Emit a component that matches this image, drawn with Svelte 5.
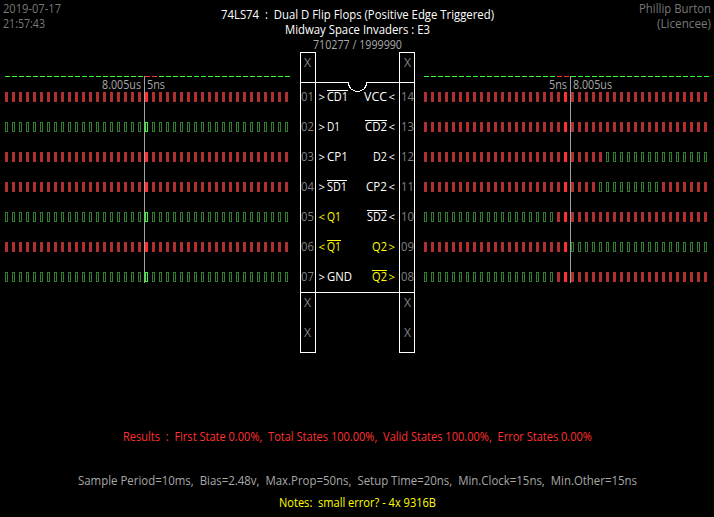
<script>
  const range = (n) => Array.from({ length: n }, (_, i) => i);
  const pattern = (fn) => range(41).map((i) => (fn(i) ? 'hi' : 'lo'));
  const all = pattern(() => true);
  const none = pattern(() => false);
  const left = [all, none, all, all, none, all, none];
  const right = [
    all,
    all,
    pattern((i) => i < 26),
    pattern((i) => i < 25 || i > 33),
    pattern((i) => i > 18),
    pattern((i) => i < 21),
    pattern((i) => i > 18)
  ];
  // Pin label: [pin, name, name start, name end, inverted, output]
  const pinsLeft = [
    ['01', 'CD1', 28, 48, true, false],
    ['02', 'D1', 28, 40, false, false],
    ['03', 'CP1', 28, 48, false, false],
    ['04', 'SD1', 28, 47, true, false],
    ['05', 'Q1', 28, 41, false, true],
    ['06', 'Q1', 28, 41, true, true],
    ['07', 'GND', 28, 52, false, false]
  ];
  const pinsRight = [
    ['14', 'VCC', 65, 87, false, false],
    ['13', 'CD2', 66, 87, true, false],
    ['12', 'D2', 74, 87, false, false],
    ['11', 'CP2', 67, 87, false, false],
    ['10', 'SD2', 68, 87, true, false],
    ['09', 'Q2', 73, 87, false, true],
    ['08', 'Q2', 73, 87, true, true]
  ];
</script>

{#snippet line(text, width, cls)}
  <svg class="line {cls}" {width} height="15">
    <text x="0" y="12" textLength={width} lengthAdjust="spacingAndGlyphs">{text}</text>
  </svg>
{/snippet}

{#snippet wave(rows, cursor, redDashes, labels)}
  <svg class="wave" width="286" height="301">
    {#each range(41) as i}
      <rect class={redDashes.includes(i) ? 'dash-red' : 'dash'} x={i * 7} y="24" width="5" height="1" />
    {/each}
    {#each rows as row, r}
      {#each row as state, i}
        {#if state === 'hi'}
          <rect class="hi" class:now={i === 20} x={i * 7} y={40 + r * 30} width="3" height="10" />
        {:else}
          <rect class="lo" class:now={i === 20} x={i * 7 + 0.5} y={40.5 + r * 30} width="2" height="9" />
        {/if}
      {/each}
    {/each}
    <rect class="cursor" x={cursor} y="24" width="1" height="207" />
    {#each labels as [text, x, width]}
      <text class="grey" {x} y="37" textLength={width} lengthAdjust="spacingAndGlyphs">{text}</text>
    {/each}
  </svg>
{/snippet}

<main>
  <header>
    <div class="side">
      {@render line('2019-07-17', 58, 'dim')}
      {@render line('21:57:43', 42, 'dim')}
    </div>
    <div class="title">
      {@render line('74LS74\u00a0 :\u00a0 Dual D Flip Flops (Positive Edge Triggered)', 273, 'white')}
      {@render line('Midway Space Invaders : E3', 145, 'white')}
      {@render line('710277 / 1999990', 89, 'grey')}
    </div>
    <div class="side end">
      {@render line('Phillip Burton', 72, 'dim')}
      {@render line('(Licencee)', 54, 'dim')}
    </div>
  </header>

  <section>
    {@render wave(left, 139, [20, 21], [['8.005us', 97, 39], ['5ns', 142, 18]])}
    <svg class="chip" width="115" height="301">
      <g class="outline">
        <rect x="0.5" y="0.5" width="15" height="300" />
        <rect x="99.5" y="0.5" width="15" height="300" />
        <path d="M0 30.5H48.5V32.5L50.5 36.5L53.5 38.5L56.5 39.5H58.5L61.5 38.5L64.5 36.5L66.5 32.5V30.5H115M0 240.5H115" />
      </g>
      {#each [15, 255, 285] as y}
        <text class="pin" x="4" {y} textLength="7" lengthAdjust="spacingAndGlyphs">X</text>
        <text class="pin" x="104" {y} textLength="7" lengthAdjust="spacingAndGlyphs">X</text>
      {/each}
      {#each [pinsLeft, pinsRight] as pins, side}
        {#each pins as [pin, name, from, to, inverted, output], i}
          {@const y = 49 + i * 30}
          <text class="pin" x={side ? 101 : 1} {y} textLength="13" lengthAdjust="spacingAndGlyphs">{pin}</text>
          <g class={output ? 'yellow' : 'white'}>
            <text class="arrow" x={side ? 88.5 : 18.5} {y} textLength="6.5" lengthAdjust="spacingAndGlyphs">{(side === 1) === output ? '>' : '<'}</text>
            <text x={from - 1} {y} textLength={to - from + 1} lengthAdjust="spacingAndGlyphs">{name}</text>
            {#if inverted}
              <rect x={from - 1} y={y - 11} width={to - from + 1} height="1" />
            {/if}
          </g>
        {/each}
      {/each}
    </svg>
    {@render wave(right, 146, [19, 20], [['5ns', 125, 18], ['8.005us', 149, 39]])}
  </section>

  <footer>
    {@render line('Results\u00a0 :\u00a0 First State 0.00%,\u00a0 Total States 100.00%,\u00a0 Valid States 100.00%,\u00a0 Error States 0.00%', 469, 'red')}
    {@render line('Sample Period=10ms,\u00a0 Bias=2.48v,\u00a0 Max.Prop=50ns,\u00a0 Setup Time=20ns,\u00a0 Min.Clock=15ns,\u00a0 Min.Other=15ns', 559, 'grey params')}
    {@render line('Notes:\u00a0 small error? - 4x 9316B', 157, 'yellow notes')}
  </footer>
</main>

<style>
  :global(body) { background: #000; }
  main {
    width: 714px;
    height: 517px;
    overflow: hidden;
    background: #000;
    font: 12.4px/15px "Open Sans", "Noto Sans", sans-serif;
  }
  svg { display: block; flex: none; overflow: visible; }
  header { display: flex; justify-content: space-between; box-sizing: border-box; height: 52px; padding: 0 3px; }
  .side { display: flex; flex-direction: column; width: 150px; padding-top: 1px; }
  .end { align-items: flex-end; }
  .title { display: flex; flex-direction: column; align-items: center; padding-top: 7px; }
  section { display: flex; gap: 9px; padding-left: 5px; }
  footer { display: flex; flex-direction: column; align-items: center; padding-top: 76px; }
  .params { margin-top: 29px; }
  .notes { margin-top: 7px; }
  .white { fill: #fff; }
  .yellow { fill: #ff0; }
  .red { fill: #ff3030; }
  .grey { fill: #a8a8a8; }
  .dim { fill: #787878; }
  .pin { fill: #808080; }
  .arrow { font-size: 11px; }
  .outline { fill: none; stroke: #fff; shape-rendering: crispEdges; }
  .dash { fill: #30ff30; }
  .dash-red { fill: #ff3030; }
  .hi { fill: #b03030; }
  .lo { fill: none; stroke: #308030; }
  .hi.now { fill: #ff3030; }
  .lo.now { stroke: #30ff30; }
  .cursor { fill: #a0a0a0; }
</style>
